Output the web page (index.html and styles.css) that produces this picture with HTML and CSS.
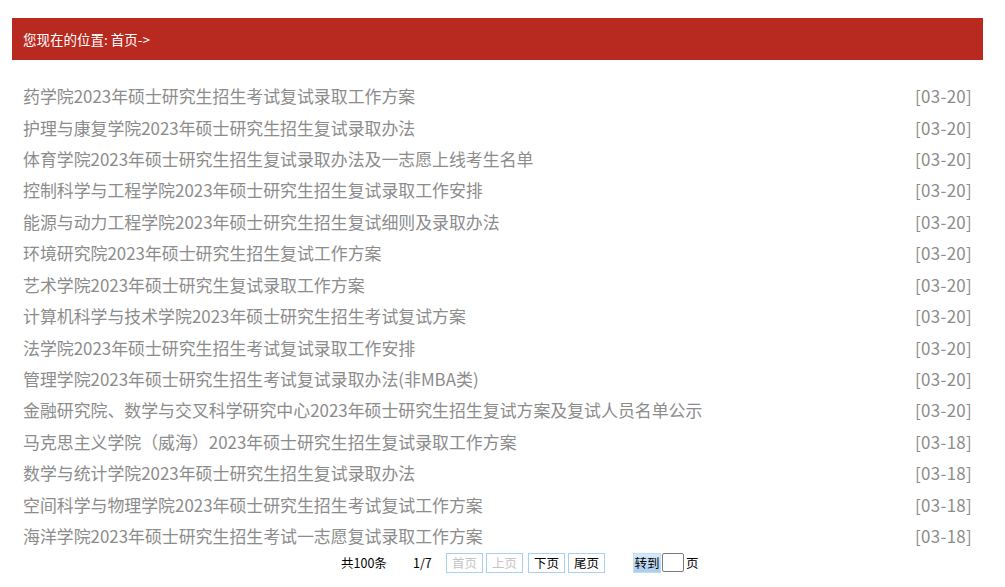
FILE: index.html
```html
<!DOCTYPE html>
<html lang="zh">
<head>
<meta charset="utf-8">
<title>列表</title>
<link rel="stylesheet" href="styles.css">
</head>
<body>
<div class="wrap">
  <div class="crumb"><span class="crumb-label">您现在的位置:</span>&nbsp;<a class="crumb-link">首页</a>-&gt;</div>
  <ul class="list">
    <li><a>药学院2023年硕士研究生招生考试复试录取工作方案</a><span class="date">[03-20]</span></li>
    <li><a>护理与康复学院2023年硕士研究生招生复试录取办法</a><span class="date">[03-20]</span></li>
    <li><a>体育学院2023年硕士研究生招生复试录取办法及一志愿上线考生名单</a><span class="date">[03-20]</span></li>
    <li><a>控制科学与工程学院2023年硕士研究生招生复试录取工作安排</a><span class="date">[03-20]</span></li>
    <li><a>能源与动力工程学院2023年硕士研究生招生复试细则及录取办法</a><span class="date">[03-20]</span></li>
    <li><a>环境研究院2023年硕士研究生招生复试工作方案</a><span class="date">[03-20]</span></li>
    <li><a>艺术学院2023年硕士研究生复试录取工作方案</a><span class="date">[03-20]</span></li>
    <li><a>计算机科学与技术学院2023年硕士研究生招生考试复试方案</a><span class="date">[03-20]</span></li>
    <li><a>法学院2023年硕士研究生招生考试复试录取工作安排</a><span class="date">[03-20]</span></li>
    <li><a>管理学院2023年硕士研究生招生考试复试录取办法(非MBA类)</a><span class="date">[03-20]</span></li>
    <li><a>金融研究院、数学与交叉科学研究中心2023年硕士研究生招生复试方案及复试人员名单公示</a><span class="date">[03-20]</span></li>
    <li><a>马克思主义学院（威海）2023年硕士研究生招生复试录取工作方案</a><span class="date">[03-18]</span></li>
    <li><a>数学与统计学院2023年硕士研究生招生复试录取办法</a><span class="date">[03-18]</span></li>
    <li><a>空间科学与物理学院2023年硕士研究生招生考试复试工作方案</a><span class="date">[03-18]</span></li>
    <li><a>海洋学院2023年硕士研究生招生考试一志愿复试录取工作方案</a><span class="date">[03-18]</span></li>
  </ul>
  <div class="pager">
    <span class="total">共100条</span>
    <span class="pages">1/7</span>
    <span class="btns">
      <span class="pbtn disabled">首页</span>
      <span class="pbtn disabled">上页</span>
      <span class="pbtn gap">下页</span>
      <span class="pbtn">尾页</span>
    </span>
    <span class="jump">
      <span class="go">转到</span>
      <span class="pinput"></span>
      <span class="unit">页</span>
    </span>
  </div>
</div>
</body>
</html>
```

FILE: styles.css
```css
html, body {
  margin: 0;
  padding: 0;
  background: #ffffff;
}
body {
  font-family: "Microsoft YaHei", "Noto Sans CJK SC", sans-serif;
}
.wrap {
  width: 971px;
  margin: 18px 0 0 12px;
}
.crumb {
  height: 42px;
  background: #b8291f;
  color: #ffffff;
  font-size: 13.5px;
  display: flex;
  align-items: center;
  padding-left: 11px;
  white-space: pre;
}
.crumb-link {
  color: #ffffff;
}
.list {
  list-style: none;
  margin: 20px 0 0 0;
  padding: 0 11px 0 11px;
}
.list li {
  height: 31.43px;
  display: flex;
  align-items: center;
  justify-content: space-between;
  font-size: 16.9px;
  color: #8c8c8c;
  white-space: nowrap;
}
.list a {
  color: #8c8c8c;
  text-decoration: none;
}
.date {
  color: #8c8c8c;
  letter-spacing: 0.3px;
}
.pager {
  display: flex;
  align-items: center;
  height: 21px;
  margin-top: 1px;
  padding-left: 329px;
  font-size: 12.5px;
  color: #000000;
}
.total {
  width: 72px;
}
.pages {
  width: 33px;
}
.btns {
  display: flex;
  gap: 3px;
}
.pbtn {
  width: 35px;
  height: 18px;
  border: 1px solid #a9d0f0;
  display: flex;
  align-items: center;
  justify-content: center;
  color: #000;
}
.pbtn.disabled {
  color: #c4c4c4;
}
.pbtn.gap {
  margin-left: 2px;
}
.jump {
  display: flex;
  align-items: center;
  margin-left: 28px;
}
.go {
  width: 26px;
  height: 18px;
  border: 1px solid #c3dcf3;
  background: linear-gradient(#d9e9f9, #a9cdef);
  display: flex;
  align-items: center;
  justify-content: center;
}
.pinput {
  width: 20px;
  height: 17px;
  margin-left: 1px;
  border: 1px solid #7a7a7a;
  border-radius: 2px;
  background: #fff;
}
.unit {
  margin-left: 2px;
}
```
